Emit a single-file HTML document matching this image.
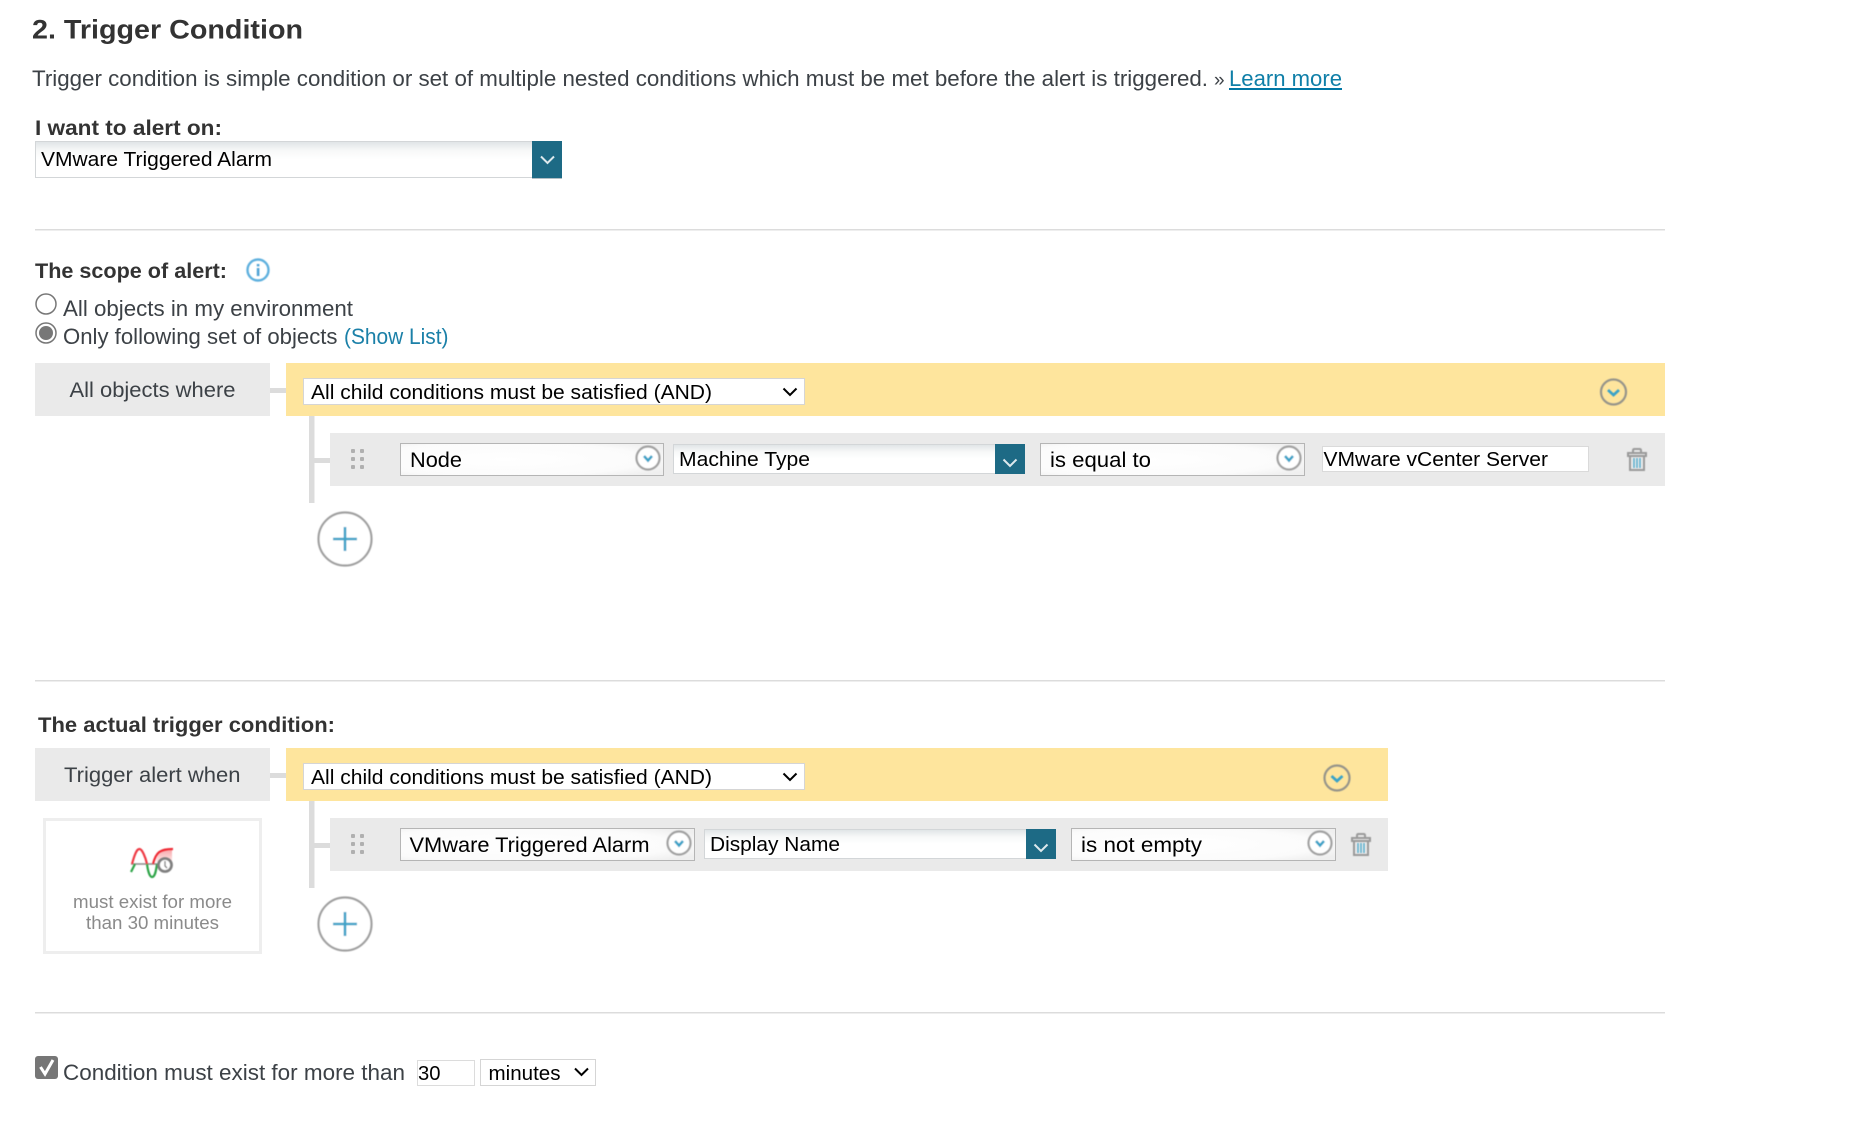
<!DOCTYPE html>
<html lang="en">
<head>
<meta charset="utf-8">
<title>Trigger Condition</title>
<style>
html,body{margin:0;padding:0;background:#fff}
svg{display:block}
text{font-family:"Liberation Sans",Arial,sans-serif;white-space:pre}
.h{font-weight:bold;fill:#333}
.b{fill:#3c4146}
.k{fill:#000}
</style>
</head>
<body>
<svg xmlns="http://www.w3.org/2000/svg" width="1866" height="1137" viewBox="0 0 1866 1137">
<defs>
<linearGradient id="g1" x1="0" y1="0" x2="0" y2="1"><stop offset="0" stop-color="#dfe4e6"/><stop offset=".25" stop-color="#f7f8f8"/><stop offset=".5" stop-color="#fff"/><stop offset="1" stop-color="#fff"/></linearGradient>
<radialGradient id="g2" cx=".4" cy=".5" r=".7"><stop offset="0" stop-color="#fff"/><stop offset=".75" stop-color="#fbfbfb"/><stop offset="1" stop-color="#efefef"/></radialGradient>
<linearGradient id="g3" x1="0" y1="0" x2="0" y2="1"><stop offset="0" stop-color="#f2494f"/><stop offset="1" stop-color="#f2494f" stop-opacity="0"/></linearGradient>
<filter id="s" x="-10%" y="-10%" width="120%" height="120%"><feGaussianBlur stdDeviation=".45"/></filter>
<g id="cv"><circle r="11.5" fill="#fff" stroke="#a0a0a0" stroke-width="2.200"/><path d="M-4 -2L0 2.500L4 -2" fill="none" stroke="#3aa3c8" stroke-width="2.600"/></g>
<g id="cy"><circle r="12.5" fill="none" stroke="#96948a" stroke-width="2.200"/><path d="M-5.500 -2L0 3L5.500 -2" fill="none" stroke="#3aa3c8" stroke-width="2.800"/></g>
<g id="pl"><circle r="26.5" fill="#fff" stroke="#a0a0a0" stroke-width="2.200"/><path d="M-12 0H12M0 -12V12" stroke="#3fa3c8" stroke-width="2.600"/></g>
<g id="tr" fill="none" stroke="#9a9a9a" stroke-width="2"><path d="M-9 -6H9V-3H-9ZM-7 -3V11H7V-3M-4 -6V-8.500Q-4 -10 -2.500 -10H2.500Q4 -10 4 -8.500V-6"/><path d="M-3 -1V9M0 -1V9M3 -1V9" stroke="#4ea9cb" stroke-width="1.400"/></g>
<g id="dd" fill="#b0b0b0"><rect x="0" y="0" width="4" height="4" rx="1"/><rect x="9" y="0" width="4" height="4" rx="1"/><rect x="0" y="8" width="4" height="4" rx="1"/><rect x="9" y="8" width="4" height="4" rx="1"/><rect x="0" y="16" width="4" height="4" rx="1"/><rect x="9" y="16" width="4" height="4" rx="1"/></g>
<path id="sc" d="M-6.500 -3L0 3.500L6.500 -3" fill="none" stroke="#fff" stroke-opacity=".85" stroke-width="2"/>
<path id="na" d="M-6.500 -3.500L0 3L6.500 -3.500" fill="none" stroke="#000" stroke-width="2"/>
</defs>

<rect width="1866" height="1137" fill="#fff"/>

<!-- Header -->
<text x="32" y="38.500" class="h" font-size="27" textLength="271" lengthAdjust="spacingAndGlyphs">2. Trigger Condition</text>
<text x="32" y="86" class="b" font-size="22" textLength="1176" lengthAdjust="spacingAndGlyphs">Trigger condition is simple condition or set of multiple nested conditions which must be met before the alert is triggered.</text>
<text x="1214" y="86" class="b" font-size="19">»</text>
<text x="1229" y="86" fill="#0f7fa8" font-size="22" textLength="113" lengthAdjust="spacingAndGlyphs">Learn more</text>
<rect x="1229" y="88" width="113" height="2" fill="#0077a5"/>

<text x="35" y="135" class="h" font-size="21" textLength="187" lengthAdjust="spacingAndGlyphs">I want to alert on:</text>
<rect x="35.500" y="141.500" width="497" height="36" fill="url(#g1)" stroke="#d3d6d8"/>
<text x="41" y="166" class="k" font-size="20" textLength="231" lengthAdjust="spacingAndGlyphs">VMware Triggered Alarm</text>
<rect x="532" y="141" width="30" height="37" fill="#1d6a85"/>
<rect x="532" y="178" width="30" height="1" fill="#b0bec5"/>
<use href="#sc" x="547.500" y="159.500"/>

<rect x="35" y="229" width="1630" height="1.500" fill="#dcdcdc"/>

<!-- Scope -->
<text x="35" y="278" class="h" font-size="21" textLength="192" lengthAdjust="spacingAndGlyphs">The scope of alert:</text>
<g filter="url(#s)"><circle cx="258" cy="270" r="10.500" fill="none" stroke="#5fb0de" stroke-width="2.400"/><rect x="256.800" y="268" width="2.600" height="8" fill="#4fa3d6"/><rect x="256.800" y="264" width="2.600" height="2.400" fill="#4fa3d6"/></g>

<circle cx="46" cy="304" r="10" fill="#fff" stroke="#777" stroke-width="1.500"/>
<text x="63" y="316" class="b" font-size="22" textLength="290" lengthAdjust="spacingAndGlyphs">All objects in my environment</text>
<circle cx="46" cy="333" r="10" fill="#fff" stroke="#777" stroke-width="1.500"/>
<circle cx="46" cy="333" r="7" fill="#777"/>
<text x="63" y="344" class="b" font-size="22" textLength="274.500" lengthAdjust="spacingAndGlyphs">Only following set of objects</text>
<text x="344" y="344" fill="#1b80a8" font-size="22" textLength="104.500" lengthAdjust="spacingAndGlyphs">(Show List)</text>

<!-- Group 1 -->
<rect x="35" y="363" width="235" height="53" fill="#eaeaea"/>
<text x="69.500" y="397" class="b" font-size="21" textLength="166" lengthAdjust="spacingAndGlyphs">All objects where</text>
<rect x="270" y="388" width="16" height="5" fill="#dcdcdc"/>
<rect x="286" y="363" width="1379" height="53" fill="#fee59d"/>
<rect x="303.500" y="378.500" width="501" height="26" fill="#fff" stroke="#d5d5d5"/>
<text x="311" y="399" class="k" font-size="20" textLength="401" lengthAdjust="spacingAndGlyphs">All child conditions must be satisfied (AND)</text>
<use href="#na" x="790" y="392"/>
<g filter="url(#s)"><use href="#cy" x="1613.500" y="392"/></g>

<rect x="309" y="416" width="5.500" height="87" fill="#dcdcdc"/>
<rect x="314" y="458" width="16" height="5" fill="#dcdcdc"/>
<rect x="330" y="433" width="1335" height="53" fill="#eaeaea"/>
<use href="#dd" x="351" y="449"/>

<rect x="400.500" y="443.500" width="263" height="32" fill="url(#g2)" stroke="#b5b5b5"/>
<text x="410" y="467" class="k" font-size="21" textLength="52" lengthAdjust="spacingAndGlyphs">Node</text>
<g filter="url(#s)"><use href="#cv" x="648" y="458"/></g>

<rect x="673.500" y="444.500" width="322" height="29" fill="url(#g1)" stroke="#d3d6d8"/>
<text x="679" y="466" class="k" font-size="20" textLength="131" lengthAdjust="spacingAndGlyphs">Machine Type</text>
<rect x="995" y="444" width="30" height="30" fill="#1d6a85"/>
<use href="#sc" x="1010" y="462.500"/>

<rect x="1040.500" y="443.500" width="264" height="32" fill="url(#g2)" stroke="#b5b5b5"/>
<text x="1050" y="467" class="k" font-size="21" textLength="101" lengthAdjust="spacingAndGlyphs">is equal to</text>
<g filter="url(#s)"><use href="#cv" x="1289" y="458"/></g>

<rect x="1322.500" y="446.500" width="266" height="25" fill="#fff" stroke="#dadada"/>
<text x="1323.500" y="466" class="k" font-size="20" textLength="224.500" lengthAdjust="spacingAndGlyphs">VMware vCenter Server</text>
<g filter="url(#s)"><use href="#tr" x="1637" y="459"/></g>

<g filter="url(#s)"><use href="#pl" x="345" y="539"/></g>

<rect x="35" y="680" width="1630" height="1.500" fill="#dcdcdc"/>

<!-- Trigger -->
<text x="38" y="732" class="h" font-size="21" textLength="297" lengthAdjust="spacingAndGlyphs">The actual trigger condition:</text>

<rect x="35" y="748" width="235" height="53" fill="#eaeaea"/>
<text x="64" y="782" class="b" font-size="21" textLength="176.500" lengthAdjust="spacingAndGlyphs">Trigger alert when</text>
<rect x="270" y="773" width="16" height="5" fill="#dcdcdc"/>
<rect x="286" y="748" width="1102" height="53" fill="#fee59d"/>
<rect x="303.500" y="763.500" width="501" height="26" fill="#fff" stroke="#d5d5d5"/>
<text x="311" y="784" class="k" font-size="20" textLength="401" lengthAdjust="spacingAndGlyphs">All child conditions must be satisfied (AND)</text>
<use href="#na" x="790" y="777"/>
<g filter="url(#s)"><use href="#cy" x="1343" y="778" transform="translate(-6 0)"/></g>

<rect x="44.500" y="819.500" width="216" height="133" fill="#fff" stroke="#eeeeee" stroke-width="3"/>
<g filter="url(#s)">
<path d="M155 866C157 852 161 849 172 849V862H155Z" fill="url(#g3)" opacity=".5"/>
<path d="M131 864H160" stroke="#8a8a8a" stroke-width="1.500"/>
<path d="M132 864C135.500 851 137.500 849 139.500 849C142 849 145.500 857 147 864" fill="none" stroke="#ef3a45" stroke-width="2.200"/>
<path d="M153 864C156 852 160 849 173 849" fill="none" stroke="#ef2a35" stroke-width="2.200"/>
<path d="M131 872C133 868 134 866 135 864M147 864C148 872 150 877 152 877C155 877 156 871 157 864" fill="none" stroke="#2fa548" stroke-width="2.200"/>
<circle cx="165" cy="865" r="6.500" fill="#fff" stroke="#808080" stroke-width="2.800"/>
<path d="M165 861V866L167 868" fill="none" stroke="#777" stroke-width="1.300"/>
</g>
<text x="73" y="908" fill="#8a8a8a" font-size="18.500" textLength="159" lengthAdjust="spacingAndGlyphs">must exist for more</text>
<text x="86" y="929" fill="#8a8a8a" font-size="18.500" textLength="133" lengthAdjust="spacingAndGlyphs">than 30 minutes</text>

<rect x="309" y="801" width="5.500" height="87" fill="#dcdcdc"/>
<rect x="314" y="843" width="16" height="5" fill="#dcdcdc"/>
<rect x="330" y="818" width="1058" height="53" fill="#eaeaea"/>
<use href="#dd" x="351" y="834"/>

<rect x="400.500" y="828.500" width="294" height="32" fill="url(#g2)" stroke="#b5b5b5"/>
<text x="409.500" y="852" class="k" font-size="21" textLength="240" lengthAdjust="spacingAndGlyphs">VMware Triggered Alarm</text>
<g filter="url(#s)"><use href="#cv" x="679" y="843"/></g>

<rect x="704.500" y="829.500" width="322" height="29" fill="url(#g1)" stroke="#d3d6d8"/>
<text x="710" y="851" class="k" font-size="20" textLength="130" lengthAdjust="spacingAndGlyphs">Display Name</text>
<rect x="1026" y="829" width="30" height="30" fill="#1d6a85"/>
<use href="#sc" x="1041" y="847.500"/>

<rect x="1071.500" y="828.500" width="264" height="32" fill="url(#g2)" stroke="#b5b5b5"/>
<text x="1081" y="852" class="k" font-size="21" textLength="121" lengthAdjust="spacingAndGlyphs">is not empty</text>
<g filter="url(#s)"><use href="#cv" x="1320" y="843"/></g>
<g filter="url(#s)"><use href="#tr" x="1361" y="844"/></g>

<g filter="url(#s)"><use href="#pl" x="345" y="924"/></g>

<rect x="35" y="1012" width="1630" height="1.500" fill="#dcdcdc"/>

<!-- Footer -->
<rect x="35" y="1056" width="23" height="23" rx="3" fill="#767676"/>
<path d="M40.500 1067L45 1074L53 1060" fill="none" stroke="#fff" stroke-width="3"/>
<text x="63" y="1080" class="b" font-size="22" textLength="342" lengthAdjust="spacingAndGlyphs">Condition must exist for more than</text>
<rect x="417.500" y="1060.500" width="57" height="25" fill="#fff" stroke="#dcdcdc"/>
<text x="418" y="1080" class="k" font-size="20" textLength="22.500" lengthAdjust="spacingAndGlyphs">30</text>
<rect x="480.500" y="1059.500" width="115" height="26" fill="#fff" stroke="#d5d5d5"/>
<text x="488.500" y="1080" class="k" font-size="20" textLength="72" lengthAdjust="spacingAndGlyphs">minutes</text>
<use href="#na" x="581.500" y="1072"/>
</svg>
</body>
</html>
